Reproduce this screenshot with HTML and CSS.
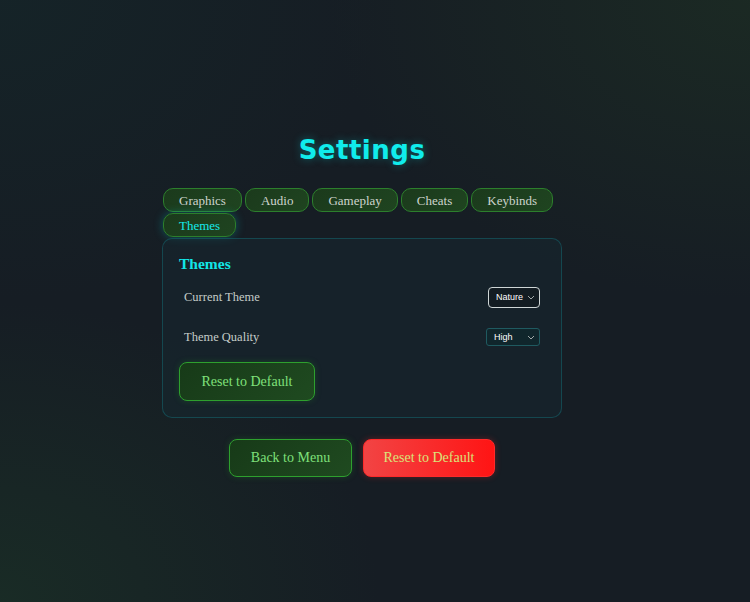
FILE: index.html
```html
<!DOCTYPE html>
<html lang="en">
<head>
	<meta charset="UTF-8">
	<title>Settings</title>
	<link rel="stylesheet" href="styles.css">
</head>
<body>
	<div class="settings">
		<h1 class="settings-title">Settings</h1>

		<!-- tabs -->
		<div class="tabs">
			<a href="#" class="tab">Graphics</a>
			<a href="#" class="tab">Audio</a>
			<a href="#" class="tab">Gameplay</a>
			<a href="#" class="tab">Cheats</a>
			<a href="#" class="tab">Keybinds</a>
			<a href="#" class="tab tab-active">Themes</a>
		</div>

		<!-- panel -->
		<div class="panel">
			<h2 class="panel-title">Themes</h2>
			<div class="row">
				<label>Current Theme</label>
				<select class="select select-focus">
					<option>Nature</option>
				</select>
			</div>
			<div class="row">
				<label>Theme Quality</label>
				<select class="select select-wide">
					<option>High</option>
				</select>
			</div>
			<a href="#" class="btn btn-green btn-panel">Reset to Default</a>
		</div>

		<div class="actions">
			<a href="#" class="btn btn-green">Back to Menu</a>
			<a href="#" class="btn btn-red">Reset to Default</a>
		</div>
	</div>
</body>
</html>
```

FILE: styles.css
```css
html, body {
	height: 100%;
}
body {
	margin: 0;
	padding: 0 26px 0 0;
	font-family: 'Liberation Serif', Georgia, serif;
	color: #c9d1cc;
	background:
		radial-gradient(ellipse 420px 300px at 100% 0%, rgba(35, 60, 35, 0.4), transparent),
		radial-gradient(ellipse 380px 300px at 0% 100%, rgba(30, 65, 40, 0.4), transparent),
		radial-gradient(ellipse 380px 300px at 0% 0%, rgba(20, 45, 45, 0.4), transparent),
		#161d24;
}
a {
	text-decoration: none;
}

.settings {
	width: 400px;
	margin: 0 auto;
	padding-top: 133px;
	display: flex;
	flex-direction: column;
	align-items: center;
}
.settings-title {
	margin: 0 0 21px;
	font-family: 'DejaVu Sans', sans-serif;
	font-weight: bold;
	font-size: 26px;
	line-height: 34px;
	letter-spacing: 0.5px;
	color: #10ecec;
	text-shadow: 0 0 8px rgba(0, 230, 230, 0.35);
}

/* tabs */
.tabs {
	align-self: stretch;
	display: flex;
	flex-wrap: wrap;
	gap: 1px 3px;
	padding-left: 1px;
}
.tab {
	height: 24px;
	line-height: 23px;
	padding: 0 15px;
	box-sizing: border-box;
	border: 1px solid #2c7f2c;
	border-radius: 10px;
	background: linear-gradient(135deg, #1b3a1c, #1f4420);
	color: #cdd4cd;
	font-size: 13px;
}
.tab-active {
	color: #14eaea;
	box-shadow: 0 0 10px rgba(0, 200, 200, 0.35);
}

/* panel */
.panel {
	align-self: stretch;
	margin-top: 1px;
	padding: 16px 16px 16px;
	border: 1px solid rgba(20, 140, 150, 0.35);
	border-radius: 10px;
	background: rgba(22, 42, 50, 0.45);
}
.panel-title {
	margin: 0 0 4px;
	font-size: 15.5px;
	line-height: 18px;
	color: #12e6e6;
}
.row {
	display: flex;
	align-items: center;
	justify-content: space-between;
	height: 40px;
	padding: 0 5px;
	font-size: 12.5px;
	color: #c4ccc8;
}
.select {
	appearance: none;
	font-family: 'Liberation Sans', Arial, sans-serif;
	font-size: 9px;
	color: #ffffff;
	height: 21px;
	width: 52px;
	padding: 0 0 0 7px;
	border: 1px solid #cfd6d6;
	border-radius: 4px;
	background:
		url("data:image/svg+xml;utf8,<svg xmlns='http://www.w3.org/2000/svg' width='8' height='5'><path d='M1 1l3 3 3-3' fill='none' stroke='%23a0a8a8' stroke-width='1'/></svg>") no-repeat right 4px center,
		#131c22;
}
.select-wide {
	height: 18px;
	width: 54px;
	border-color: #1f5a60;
	border-radius: 3px;
	background-color: #10262c;
}

/* buttons */
.btn {
	display: block;
	box-sizing: border-box;
	border-radius: 8px;
	font-size: 14px;
	text-align: center;
}
.btn-green {
	border: 1px solid #2ea02e;
	background: linear-gradient(135deg, #173a18, #1f4a20);
	color: #7fe07a;
	box-shadow: 0 0 6px rgba(40, 160, 40, 0.25);
}
.btn-panel {
	width: 136px;
	height: 39px;
	line-height: 37px;
	margin-top: 5px;
	margin-left: 0;
}
.actions {
	display: flex;
	gap: 11px;
	margin-top: 21px;
}
.actions .btn {
	height: 38px;
	line-height: 36px;
}
.actions .btn-green {
	width: 123px;
}
.btn-red {
	width: 132px;
	border: 1px solid #ff2a2a;
	background: linear-gradient(90deg, #f24444, #ff1414);
	color: #d9e27a;
	box-shadow: 0 0 6px rgba(255, 40, 40, 0.3);
}
```
